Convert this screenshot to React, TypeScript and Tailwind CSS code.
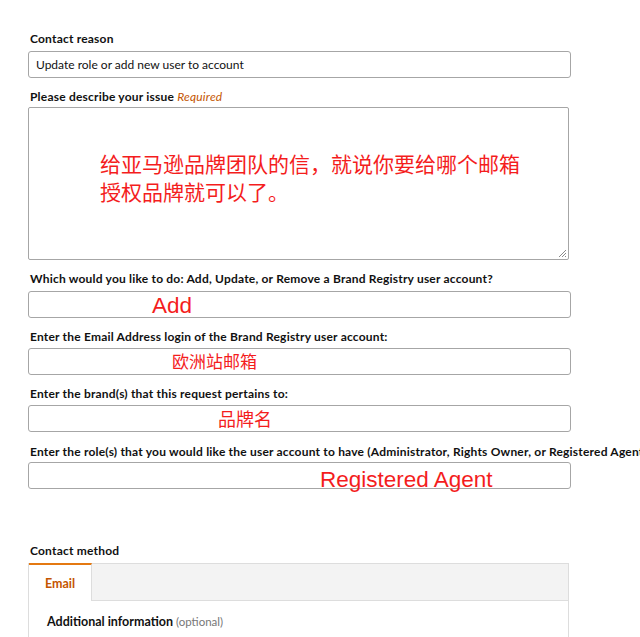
export default function App() {
  const label = "text-[12px] tracking-[0.2px] font-bold text-[#111] leading-[14px] whitespace-nowrap pl-[2px]";
  const box = "w-[543px] h-[27px] border border-[#a6a6a6] rounded-[3px] bg-white relative";
  const red = "absolute text-[#f41d1d] whitespace-nowrap";
  return (
    <div
      className="w-[640px] h-[637px] overflow-hidden bg-white pl-[28px] pt-[32px]"
      style={{ fontFamily: '"Lato", "Liberation Sans", "Noto Sans CJK SC", sans-serif' }}
    >
      <div className={label}>Contact reason</div>
      <div className={`${box} mt-[5px] flex items-center pl-[7px] text-[12px] text-[#111]`}>
        Update role or add new user to account
      </div>

      <div className={`${label} mt-[12px]`}>
        Please describe your issue{" "}
        <span className="font-normal italic text-[#c45500]">Required</span>
      </div>
      <div className="w-[541px] h-[153px] mt-[3px] border border-[#a6a6a6] rounded-[2px] relative">
        <div
          className="absolute left-[71px] top-[41px] text-[21px] leading-[28px] text-[#f41d1d]"
          style={{ fontFamily: '"Noto Sans CJK SC", sans-serif' }}
        >
          给亚马逊品牌团队的信，就说你要给哪个邮箱
          <br />
          授权品牌就可以了。
        </div>
        <svg className="absolute right-[1px] bottom-[1px]" width="9" height="9" viewBox="0 0 9 9">
          <path d="M8 1L1 8M8 4L4 8M8 7L7 8" stroke="#8a8a8a" strokeWidth="1" />
        </svg>
      </div>

      <div className={`${label} mt-[12px]`}>
        Which would you like to do: Add, Update, or Remove a Brand Registry user account?
      </div>
      <div className={`${box} mt-[5px]`}>
        <span className={`${red} left-[123px] top-[1px] text-[22.5px] leading-[26px]`} style={{ fontFamily: '"Liberation Sans", sans-serif' }}>
          Add
        </span>
      </div>

      <div className={`${label} mt-[12px]`}>
        Enter the Email Address login of the Brand Registry user account:
      </div>
      <div className={`${box} mt-[4px]`}>
        <span className={`${red} left-[143px] top-[0px] text-[17px] leading-[24px]`} style={{ fontFamily: '"Noto Sans CJK SC", sans-serif' }}>
          欧洲站邮箱
        </span>
      </div>

      <div className={`${label} mt-[12px]`}>Enter the brand(s) that this request pertains to:</div>
      <div className={`${box} mt-[4px]`}>
        <span className={`${red} left-[189px] top-[0px] text-[18px] leading-[24px]`} style={{ fontFamily: '"Noto Sans CJK SC", sans-serif' }}>
          品牌名
        </span>
      </div>

      <div className={`${label} mt-[13px]`}>
        Enter the role(s) that you would like the user account to have (Administrator, Rights Owner, or Registered Agent):
      </div>
      <div className={`${box} mt-[3px]`}>
        <span className={`${red} left-[291px] top-[4px] text-[22.5px] leading-[26px]`} style={{ fontFamily: '"Liberation Sans", sans-serif' }}>
          Registered Agent
        </span>
      </div>

      <div className={`${label} mt-[55px]`}>Contact method</div>
      <div className="w-[541px] h-[100px] mt-[5px] border border-[#dddddd] border-t-0">
        <div className="flex h-[38px] bg-[#f3f3f3]">
          <div className="w-[63px] h-[38px] bg-white border-t-2 border-[#e47911] border-r border-r-[#dddddd] pl-[16px] pt-[10px] text-[12.5px] font-bold text-[#c45500]">
            Email
          </div>
          <div className="flex-1 border-t border-b border-[#dddddd]" />
        </div>
        <div className="pl-[18px] pt-[12px] text-[12.5px] font-bold text-[#111] whitespace-nowrap">
          Additional information <span className="font-normal text-[11.5px] text-[#777]">(optional)</span>
        </div>
      </div>
    </div>
  );
}
